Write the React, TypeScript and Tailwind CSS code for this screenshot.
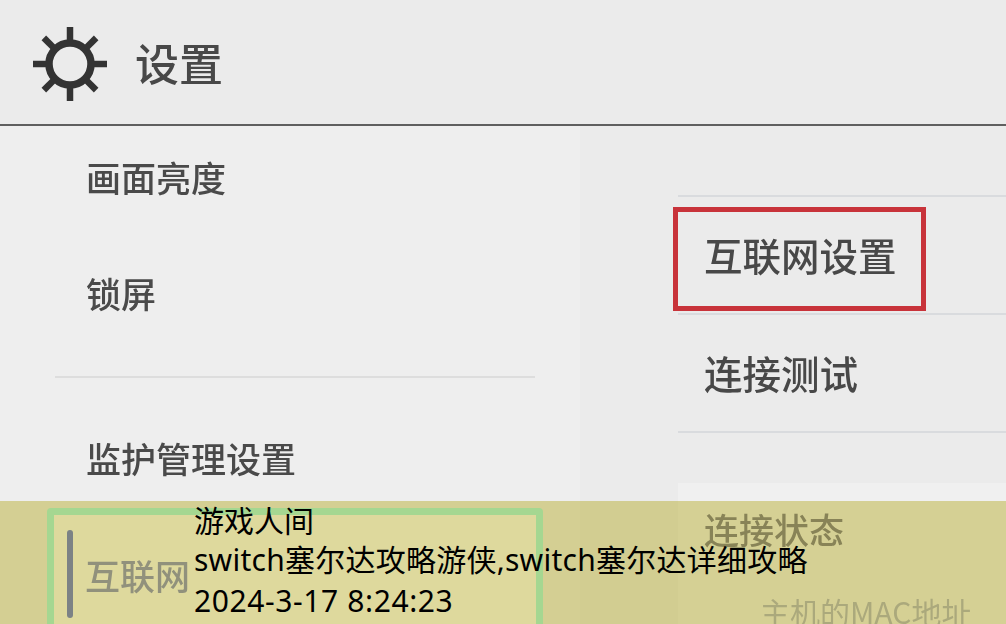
import React from 'react'

const cjk = { fontFamily: '"Noto Sans CJK SC", "Noto Sans", sans-serif' }
const caption = { fontFamily: '"Noto Sans", "Noto Sans CJK SC", sans-serif' }

function GearIcon() {
  const spokes = [0, 45, 90, 135, 180, 225, 270, 315]
  return (
    <svg width="76" height="76" viewBox="0 0 76 76" className="shrink-0">
      <circle cx="38" cy="38" r="21" fill="none" stroke="#333333" strokeWidth="7.5" />
      {spokes.map((a) => (
        <line
          key={a}
          x1="38"
          y1="16"
          x2="38"
          y2="1"
          stroke="#333333"
          strokeWidth="6.5"
          transform={`rotate(${a} 38 38)`}
        />
      ))}
    </svg>
  )
}

export default function App() {
  return (
    <div className="relative w-[1006px] h-[624px] overflow-hidden bg-[#ebebeb]" style={cjk}>
      <div className="flex flex-col h-full blur-[0.7px]">
        {/* Title bar */}
        <header className="shrink-0 h-[126px] border-b-2 border-[#5f5f5f] flex items-center pl-[32px] pt-[4px]">
          <GearIcon />
          <h1 className="ml-[27px] -mt-[4px] text-[44px] leading-none font-medium text-[#484848]">设置</h1>
        </header>

        <div className="flex flex-1 min-h-0">
          {/* Left menu */}
          <aside className="shrink-0 w-[580px] h-full bg-[#eeeeee] pl-[47px] pr-[37px]">
            <div className="pl-[39px] pt-[29px] text-[35px] leading-[44px] font-medium text-[#4a4a4a]">画面亮度</div>
            <div className="pl-[39px] mt-[72px] text-[35px] leading-[44px] font-medium text-[#4a4a4a]">锁屏</div>
            <div className="ml-[8px] mr-[8px] mt-[61px] h-[2px] bg-[#dddddd]" />
            <div className="pl-[39px] mt-[58px] text-[35px] leading-[44px] font-medium text-[#4a4a4a]">监护管理设置</div>
            <div className="mt-[28px] h-[140px] rounded-[4px] border-[7px] border-[#a0fceb] bg-white flex pl-[13px] pt-[15px]">
              <div className="w-[6px] h-[88px] rounded-full bg-[#5c6fd8] shrink-0" />
              <div className="ml-[12px] pt-[23px] text-[35px] leading-[44px] font-medium text-[#7f88c8]">互联网</div>
            </div>
          </aside>

          {/* Right list */}
          <section className="flex-1 min-w-0 pl-[98px] pt-[69px]">
            <div className="h-[2px] bg-[#d9dbde]" />
            <div className="relative h-[116px] flex items-center pl-[26px] pb-[2px] text-[38.5px] leading-none font-medium text-[#484848]">
              互联网设置
              <div className="absolute left-[-5px] top-[10px] w-[253px] h-[104px] border-[5px] border-[#c8333a]" />
            </div>
            <div className="h-[2px] bg-[#d9dbde]" />
            <div className="h-[116px] flex items-center pl-[26px] pb-[2px] text-[38.5px] leading-none font-medium text-[#484848]">连接测试</div>
            <div className="h-[2px] bg-[#d9dbde]" />
            <div className="mt-[50px] bg-[#f0f0f0] h-[200px] pl-[26px] pt-[24px]">
              <div className="text-[35px] leading-[44px] font-medium text-[#70708a]">连接状态</div>
              <div className="pl-[56px] mt-[43px] text-[30px] leading-[34px] text-[#abafc8]">主机的MAC地址</div>
            </div>
          </section>
        </div>
      </div>

      {/* Caption strip over the picture */}
      <div className="absolute left-0 right-0 bottom-0 h-[123px] bg-[#aca00a]/40 pl-[194px] text-[30px] leading-[40.5px] text-black" style={caption}>
        <div>游戏人间</div>
        <div className="-mt-[2px] tracking-[0.25px]">switch塞尔达攻略游侠,switch塞尔达详细攻略</div>
        <div className="mt-[1px] tracking-[0.6px]">2024-3-17 8:24:23</div>
      </div>
    </div>
  )
}
